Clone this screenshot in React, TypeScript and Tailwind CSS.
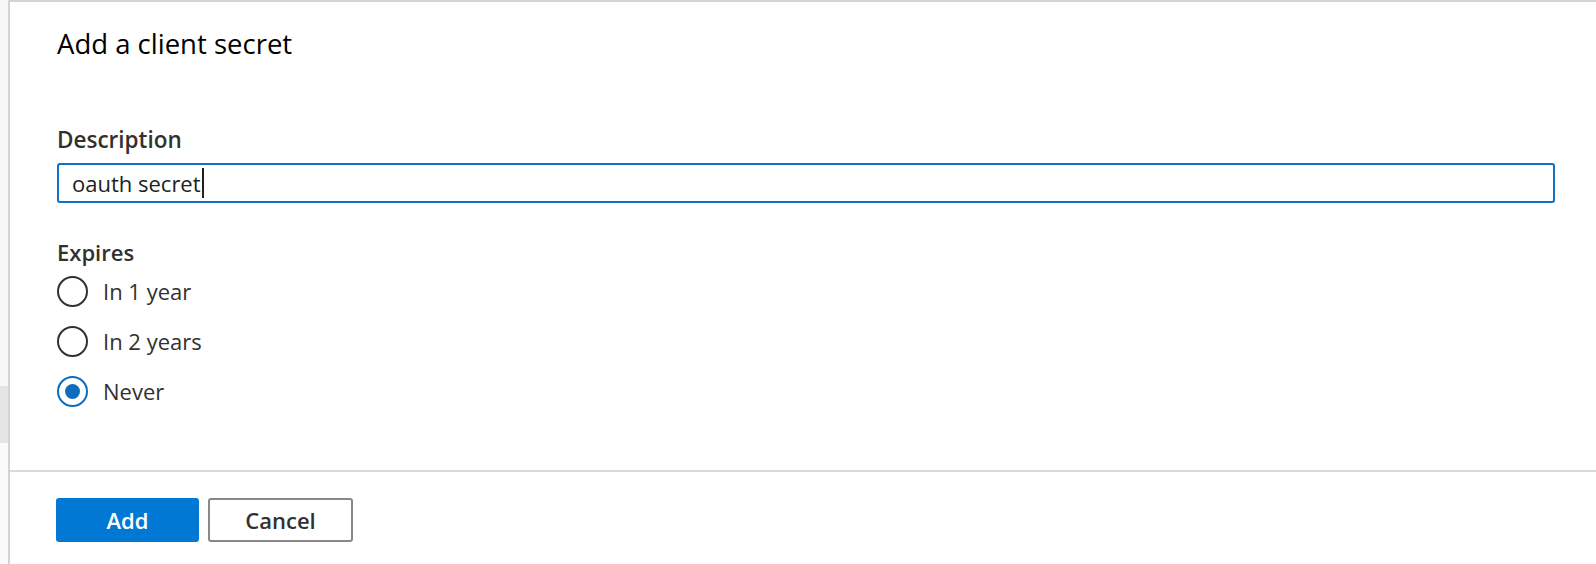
import { useState } from "react";

const options = ["In 1 year", "In 2 years", "Never"];

export default function App() {
  const [expires, setExpires] = useState("Never");

  return (
    <div className="flex h-[564px] w-[1596px] bg-white font-['Open_Sans',sans-serif] overflow-hidden">
      {/* backdrop strip on the left */}
      <div className="flex w-[8px] flex-col bg-[#f7f7f7]">
        <div className="h-[386px]" />
        <div className="h-[57px] bg-[#e4e4e4]" />
        <div className="flex-1 bg-[#fafafa]" />
      </div>

      <div className="flex flex-1 flex-col border-l-2 border-t-2 border-[#d4d4d4]">
        <div className="flex-1 pl-[47px] pr-[41px] pt-[23px]">
          <h1 className="text-[27.5px] leading-[37px] text-black">Add a client secret</h1>

          <label className="mt-[64px] block text-[22.5px] font-semibold leading-[28px] text-[#323130]">
            Description
          </label>
          <div className="mt-[9px] flex h-[40px] items-center rounded-[3px] border-2 border-[#1170c4] pl-[13px] text-[22px] leading-[28px] text-[#201f1e]">
            <span>oauth secret</span>
            <span className="ml-[1px] h-[30px] w-[2px] bg-[#201f1e]" />
          </div>

          <div className="mt-[35px] text-[22px] font-semibold leading-[28px] text-[#323130]">Expires</div>
          <div className="flex flex-col">
            {options.map((o) => {
              const on = expires === o;
              return (
                <button
                  key={o}
                  onClick={() => setExpires(o)}
                  className="flex h-[50px] items-center gap-[15px] text-left"
                >
                  <span
                    className={
                      on
                        ? "flex h-[31px] w-[31px] items-center justify-center rounded-full border-2 border-[#0f6cbd]"
                        : "flex h-[31px] w-[31px] items-center justify-center rounded-full border-2 border-[#323130]"
                    }
                  >
                    {on && <span className="h-[15px] w-[15px] rounded-full bg-[#0f6cbd]" />}
                  </span>
                  <span className="text-[22px] leading-[28px] text-[#323130]">{o}</span>
                </button>
              );
            })}
          </div>
        </div>

        <div className="flex gap-[9px] border-t-2 border-[#dadada] pb-[22px] pl-[46px] pt-[26px]">
          <button className="h-[44px] w-[143px] rounded-[3px] bg-[#0078d4] text-[22px] font-semibold text-white">
            Add
          </button>
          <button className="h-[44px] w-[145px] rounded-[3px] border-2 border-[#8a8886] bg-white text-[22px] font-semibold text-[#323130]">
            Cancel
          </button>
        </div>
      </div>
    </div>
  );
}
